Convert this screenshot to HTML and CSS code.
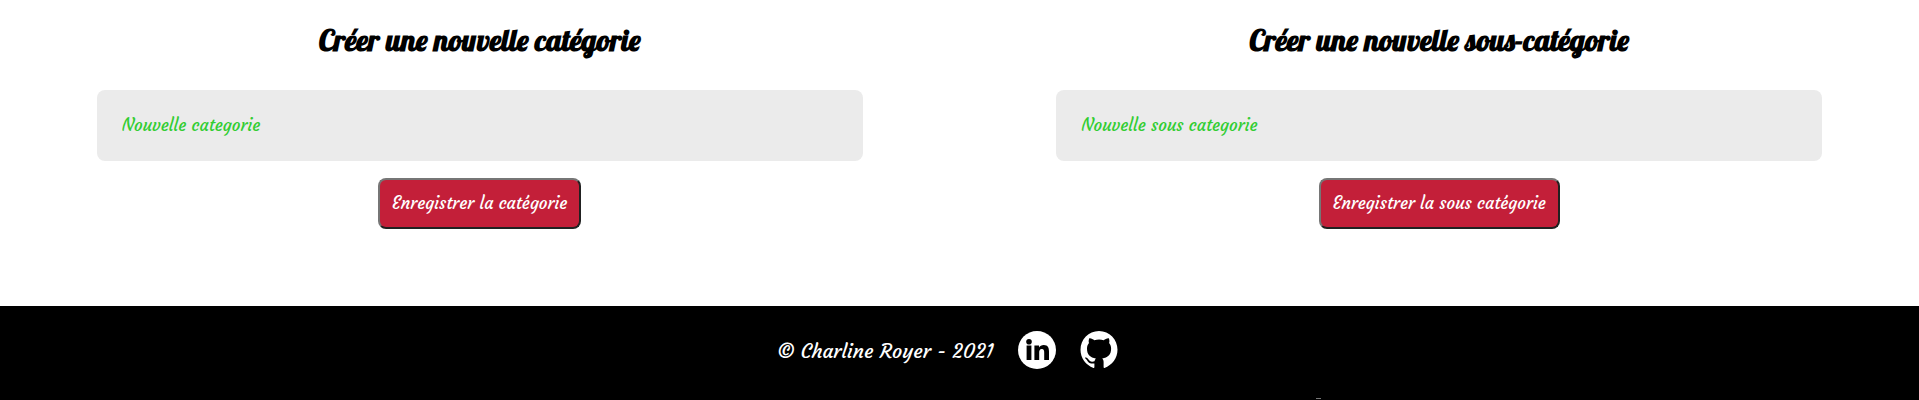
FILE: index.html
```html
<!DOCTYPE html>
<html lang="fr">
<head>
<meta charset="utf-8">
<title>Catégories</title>
<link rel="stylesheet" href="styles.css">
</head>
<body>
<main class="panels">
  <form class="panel">
    <h2 class="panel-title">Créer une nouvelle catégorie</h2>
    <input class="field" type="text" placeholder="Nouvelle categorie" aria-label="Nouvelle categorie">
    <button class="submit" type="button">Enregistrer la catégorie</button>
  </form>
  <form class="panel">
    <h2 class="panel-title">Créer une nouvelle sous-catégorie</h2>
    <input class="field" type="text" placeholder="Nouvelle sous categorie" aria-label="Nouvelle sous categorie">
    <button class="submit" type="button">Enregistrer la sous catégorie</button>
  </form>
</main>
<footer class="footer">
  <p class="copyright">© Charline Royer - 2021</p>
  <a class="social" href="#" aria-label="LinkedIn">
    <svg viewBox="0 0 38 38" width="38" height="38"><circle cx="19" cy="19" r="19" fill="#fff"/><circle cx="11" cy="10.8" r="2.8"/><path d="M8.6 14.4h4.8V29H8.6zM16.4 14.4H21v2c.8-1.5 2.5-2.5 4.8-2.5 4.2 0 5.2 2.8 5.2 6.6V29h-4.8v-7.3c0-1.9-.2-3.7-2.4-3.7s-2.6 1.8-2.6 3.7V29h-4.8z"/></svg>
  </a>
  <a class="social" href="#" aria-label="GitHub">
    <svg viewBox="0 0 38 38" width="38" height="38"><path fill="#fff" d="M19 0C8.5 0 .5 8.300.5 18.800c0 8.400 5.400 15.500 13 18.100.2 0 .9 0 .9-1v-3.500c-5 .8-6.300-1.300-7.200-2.900-.6-1-1.300-1.700-2-2.200-.4-.4-.2-.9.3-.9 2.200 0 2.900 2.200 4.100 3.300 1.400 1.200 3.400 1.100 4.900.5.200-1 .7-2 1.400-2.700-5.600-.8-8.900-3.700-8.900-9.700 0-2.500.7-4.200 2-5.700-.5-1.300-.4-2.900.1-4.400.1-.4.400-.5.800-.4 1.600.2 3.100 1 4.500 1.900 3-.8 6.300-.8 9.300 0 1.400-.9 2.900-1.700 4.500-1.900.4-.1.700 0 .8.400.5 1.500.6 3.100.1 4.400 1.300 1.500 2 3.200 2 5.700 0 6-3.300 8.900-8.900 9.700.9.9 1.400 2.100 1.400 3.600v4.800c0 1 .7 1 .9 1 7.600-2.600 13-9.700 13-18.100C37.500 8.300 29.500 0 19 0z"/></svg>
  </a>
</footer>
</body>
</html>
```
FILE: styles.css
```css
* { box-sizing: border-box; }

body {
  margin: 0;
  background: #fff;
  color: #000;
  font-family: Courgette, "Liberation Serif", serif;
}

.panels {
  display: grid;
  grid-template-columns: 1fr 1fr;
}

.panel {
  display: flex;
  flex-direction: column;
  align-items: center;
  padding: 20px 10.1% 77px;
}

.panel-title {
  margin: 0 0 30px;
  font-family: Lobster, "Liberation Serif", serif;
  font-size: 30px;
  line-height: 40px;
  font-weight: 700;
  white-space: nowrap;
}

.field {
  width: 100%;
  height: 71px;
  padding: 0 25px 2px;
  border: 0;
  border-radius: 8px;
  background: #ebebeb;
  color: #000;
  font: inherit;
  font-size: 17px;
}

.field::placeholder {
  color: limegreen;
  opacity: 1;
}

.submit {
  margin-top: 17px;
  padding: 12px;
  border: 2px solid;
  border-color: #767676 #212121 #212121 #767676;
  border-radius: 8px;
  background: #c31f39;
  color: #fff;
  font: inherit;
  font-size: 17px;
  line-height: 23px;
  white-space: nowrap;
}

.footer {
  position: relative;
  display: flex;
  justify-content: center;
  align-items: center;
  gap: 24px;
  padding: 25px 24px 31px 0;
  background: #000;
  color: #fff;
}

/* Small tick on the lower edge of the footer */
.footer::after {
  content: "";
  position: absolute;
  bottom: 1px;
  left: 68.6%;
  width: 5px;
  height: 1px;
  background: #777;
}

.copyright {
  margin: 0;
  padding-top: 2px;
  font-size: 20px;
  line-height: 36px;
}

.social { display: flex; }
```
